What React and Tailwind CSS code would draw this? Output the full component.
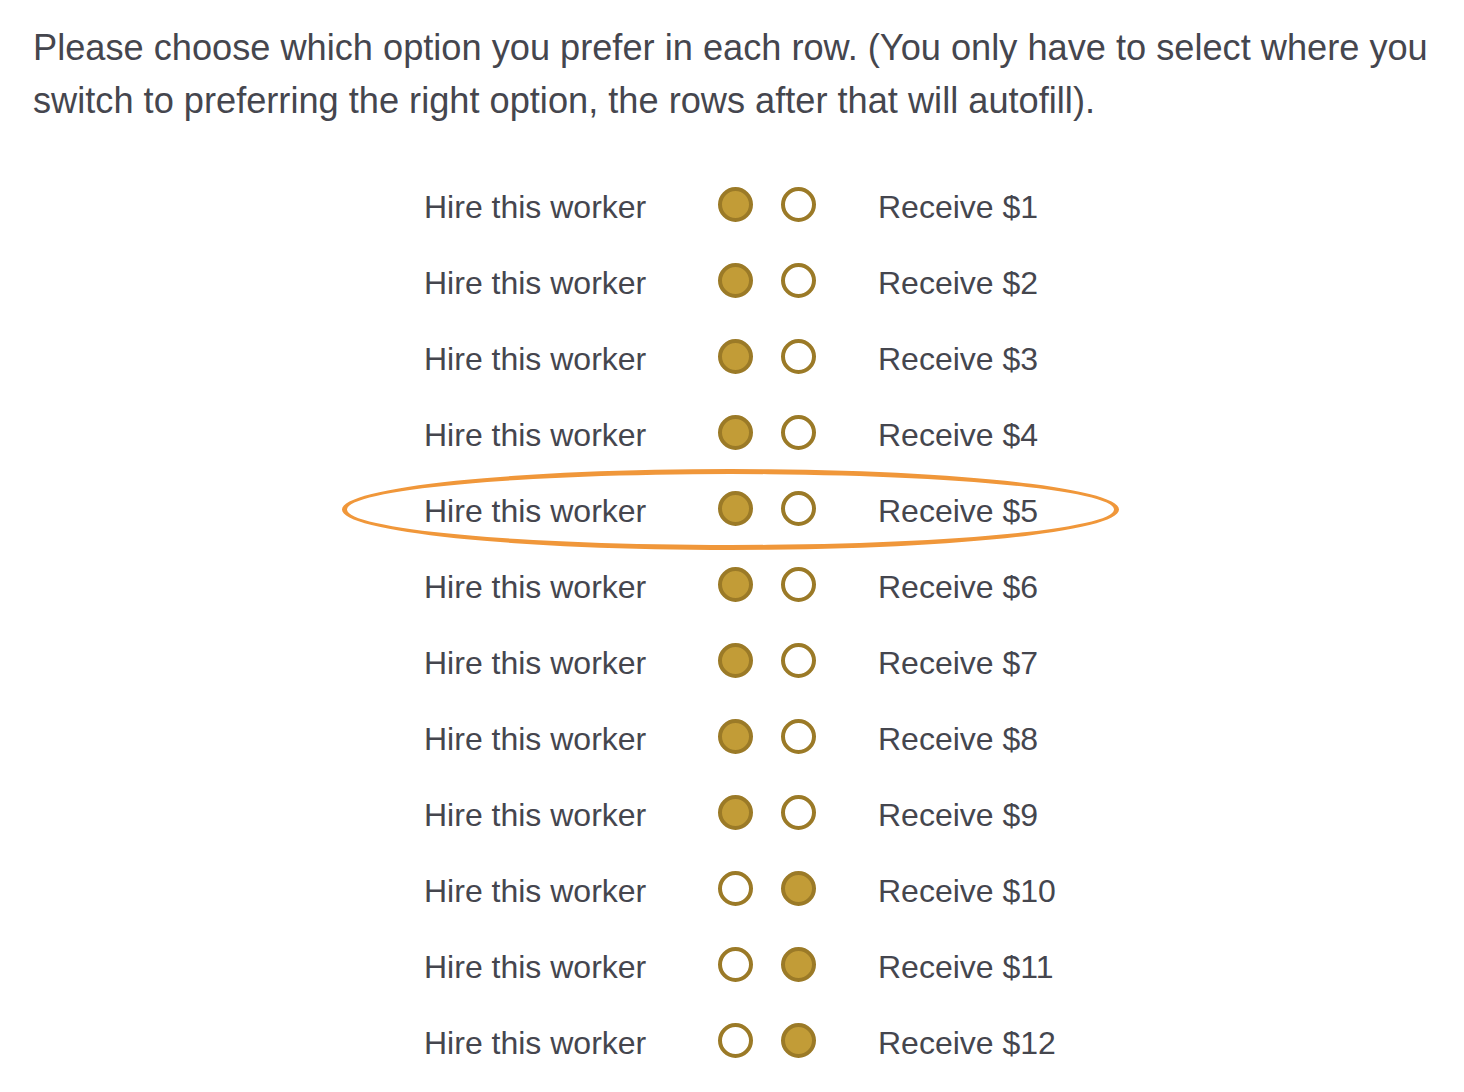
export default function App() {
  const rows = Array.from({ length: 12 }, (_, i) => i + 1);
  return (
    <div
      className="w-[1464px] h-[1092px] bg-white text-[#45464e] overflow-hidden"
      style={{ fontFamily: '"Liberation Sans", Arial, sans-serif' }}
    >
      <p className="pl-[33px] pt-[21px] text-[36.2px] leading-[53px] whitespace-nowrap">
        Please choose which option you prefer in each row. (You only have to select where you
        <br />
        switch to preferring the right option, the rows after that will autofill).
      </p>
      <div className="mt-[42px] ml-[424px] flex flex-col">
        {rows.map((n) => {
          const leftSel = n <= 9;
          return (
            <div key={n} className="relative flex items-center h-[76px] text-[32px]">
              {n === 5 && (
                <div className="absolute left-[-82px] top-[-4px] w-[777px] h-[81px] rounded-[50%] border-[5px] border-[#f0973a]" />
              )}
              <span className="w-[222px] whitespace-nowrap">Hire this worker</span>
              <span
                className={`ml-[72px] mt-[-6px] w-[35px] h-[35px] rounded-full border-[4px] border-[#9b7a27] ${
                  leftSel ? 'bg-[#c29c37]' : 'bg-white'
                }`}
              />
              <span
                className={`ml-[28px] mt-[-6px] w-[35px] h-[35px] rounded-full border-[4px] border-[#9b7a27] ${
                  leftSel ? 'bg-white' : 'bg-[#c29c37]'
                }`}
              />
              <span className="ml-[62px] whitespace-nowrap">Receive ${n}</span>
            </div>
          );
        })}
      </div>
    </div>
  );
}
